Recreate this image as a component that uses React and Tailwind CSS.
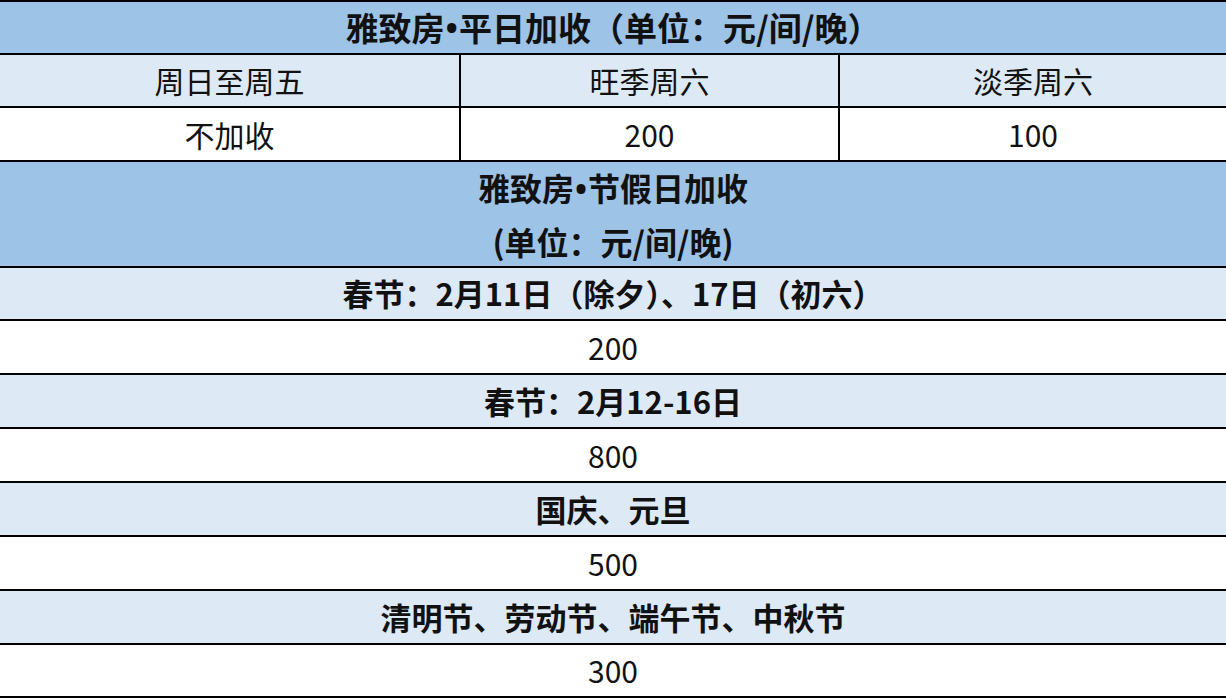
const font = { fontFamily: '"Noto Sans CJK SC", "Noto Sans", sans-serif' };

// the bullet is narrow in the reference, so it gets a latin font
const Dot = () => <span className="font-['Noto_Sans'] px-[1px]">•</span>;

const holidayRows = [
  { key: 'cj1', title: '春节：2月11日（除夕）、17日（初六）', price: '200' },
  { key: 'cj2', title: '春节：2月12-16日', price: '800' },
  { key: 'gq', title: '国庆、元旦', price: '500' },
  { key: 'qm', title: '清明节、劳动节、端午节、中秋节', price: '300' },
];

export default function App() {
  return (
    <div
      className="w-[1226px] h-[700px] bg-white text-[#111] overflow-hidden"
      style={font}
    >
      <div className="border-t-2 border-black">
        <div className="flex h-[53px] items-center justify-center border-b-2 border-black bg-[#9dc3e6] text-[33px] font-bold">
          雅致房<Dot />平日加收（单位：元/间/晚）
        </div>

        <div className="flex h-[53px] border-b-2 border-black bg-[#dde9f5] text-[30px]">
          <div className="flex w-[461px] items-center justify-center border-r-2 border-black">
            周日至周五
          </div>
          <div className="flex w-[379px] items-center justify-center border-r-2 border-black">
            旺季周六
          </div>
          <div className="flex flex-1 items-center justify-center">淡季周六</div>
        </div>

        <div className="flex h-[54px] border-b-2 border-black bg-white text-[30px]">
          <div className="flex w-[461px] items-center justify-center border-r-2 border-black">
            不加收
          </div>
          <div className="flex w-[379px] items-center justify-center border-r-2 border-black">
            200
          </div>
          <div className="flex flex-1 items-center justify-center">100</div>
        </div>

        <div className="flex h-[106px] flex-col items-center justify-center border-b-2 border-black bg-[#9dc3e6] text-[32px] font-bold leading-[52px]">
          <span>
            雅致房<Dot />节假日加收
          </span>
          <span>(单位：元/间/晚)</span>
        </div>

        {holidayRows.map((row, i) => (
          <div key={row.key}>
            <div
              className={`flex ${i === 0 ? 'h-[53px]' : 'h-[54px]'} items-center justify-center border-b-2 border-black bg-[#dde9f5] text-[31px] font-bold`}
            >
              {row.title}
            </div>
            <div
              className={`flex ${i === 3 ? 'h-[53px]' : 'h-[54px]'} items-center justify-center border-b-2 border-black bg-white text-[30px]`}
            >
              {row.price}
            </div>
          </div>
        ))}
      </div>
    </div>
  );
}
